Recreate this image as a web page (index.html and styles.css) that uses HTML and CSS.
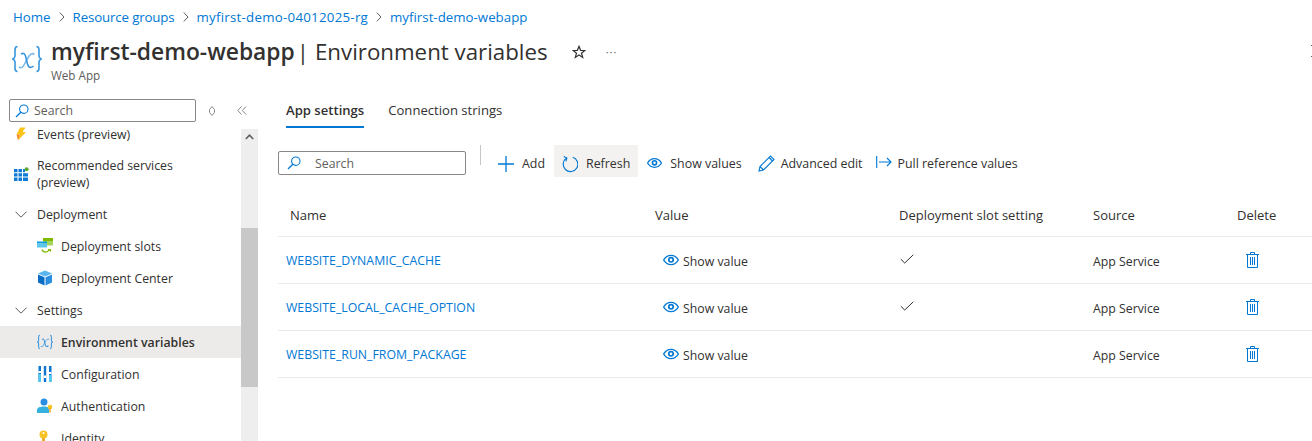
FILE: index.html
```html
<!DOCTYPE html>
<html lang="en">
<head>
    <meta charset="UTF-8">
    <title>Environment variables</title>
    <link rel="stylesheet" href="styles.css">
</head>
<body>
    <svg class="defs" width="0" height="0">
        <symbol id="eye" viewBox="0 0 16 12"><path d="M.6 6C2.4 3 5 1.4 8 1.4S13.600 3 15.400 6C13.600 9 11 10.600 8 10.600S2.400 9 .6 6Z" fill="none" stroke="currentColor" stroke-width="1.400"/><circle cx="8" cy="5.800" r="2.200" fill="none" stroke="currentColor" stroke-width="1.700"/></symbol>
        <symbol id="trash" viewBox="0 0 13 16"><path d="M0 2.500H13M4.500 2.500V.5H8.500V2.500M1.500 2.500V15.500H11.500V2.500M4.500 5V13M6.500 5V13M8.500 5V13" fill="none" stroke="currentColor" stroke-width="1"/></symbol>
        <symbol id="check" viewBox="0 0 14 10"><path d="M.8 5.200L4.700 9 13.300.8" fill="none" stroke="currentColor" stroke-width="1"/></symbol>
        <symbol id="glass" viewBox="0 0 14 14"><circle cx="8.800" cy="5.200" r="4.200" fill="none" stroke="currentColor" stroke-width="1.100"/><path d="M5.800 8.200L1 13" fill="none" stroke="currentColor" stroke-width="1.300"/></symbol>
        <symbol id="chev" viewBox="0 0 12 7"><path d="M.5.700L6 6.200 11.500.700" fill="none" stroke="currentColor" stroke-width="1"/></symbol>
        <symbol id="crumb" viewBox="0 0 6 10"><path d="M.8.600L5 5 .8 9.400" fill="none" stroke="currentColor" stroke-width="1"/></symbol>
        <symbol id="envx" viewBox="0 0 30 28"><g fill="none" stroke="#3a96dd"><path d="M5.500 1.500C3.500 1.500 3 3 3 5V11C3 12.800 2 13.500 .8 14C2 14.500 3 15.200 3 17V23C3 25 3.500 26.500 5.500 26.500M24.500 1.500C26.500 1.500 27 3 27 5V11C27 12.800 28 13.500 29.200 14C28 14.500 27 15.200 27 17V23C27 25 26.500 26.500 24.500 26.500"/><path d="M9 9C11.500 7.500 13 8.500 13.800 12L15.500 19C16.300 22.500 18.500 23.500 21.500 21"/><path d="M22.500 9.500C20.500 7.500 18 9 15.500 13.500L12.500 19C11 22.500 9 23.500 7 22" opacity=".65"/></g></symbol>
    </svg>

    <nav class="breadcrumb">
        <a>Home</a><svg class="sep"><use href="#crumb"/></svg>
        <a class="crumb-tight">Resource groups</a><svg class="sep"><use href="#crumb"/></svg>
        <a class="crumb-wide">myfirst-demo-04012025-rg</a><svg class="sep"><use href="#crumb"/></svg>
        <a>myfirst-demo-webapp</a>
    </nav>

    <header class="page-head">
        <svg class="page-icon"><use href="#envx"/></svg>
        <div class="page-titles">
            <div class="title-row">
                <h1><b>myfirst-demo-webapp</b><span class="pipe">|</span>Environment variables</h1>
                <svg class="star" width="14" height="14" viewBox="0 0 14 14"><path d="M7 1.300L8.600 5.300 12.800 5.500 9.500 8.200 10.700 12.400 7 10 3.300 12.400 4.500 8.200 1.200 5.500 5.400 5.300Z" fill="none" stroke="#323130" stroke-width="1.200"/></svg>
                <span class="more">···</span>
            </div>
            <div class="subtitle">Web App</div>
        </div>
        <svg class="close-mark" width="1" height="12" viewBox="0 0 1 12"><path d="M0 0H1V1H0ZM0 11H1V12H0Z" fill="#605e5c"/></svg>
    </header>

    <div class="workspace">
        <aside class="sidebar">
            <div class="side-search-row">
                <div class="searchbox side-search">
                    <svg class="ic-glass"><use href="#glass"/></svg>
                    <span>Search</span>
                </div>
                <svg class="updown" width="8" height="10" viewBox="0 0 8 10"><path d="M4 .5L6.500 3.500V6.500L4 9.500 1.500 6.500V3.500Z" fill="none" stroke="#8a8886" stroke-width="1"/></svg>
                <svg class="collapse" width="10" height="9" viewBox="0 0 10 9"><path d="M4.500.5L.8 4.500 4.500 8.500M9 .5L5.300 4.500 9 8.500" fill="none" stroke="#8a8886" stroke-width="1"/></svg>
            </div>
            <div class="side-scroll">
                <ul class="menu">
                    <li class="item top">
                        <svg class="menu-icon" width="16" height="16" viewBox="0 0 16 16"><path d="M7 1.500H12.500L9.500 6H13L5 14.500 7 8.500H3.500Z" fill="#fcc419"/><path d="M3.500 8.500H7L5 14.500Z" fill="#f28c28"/></svg>
                        <span>Events (preview)</span>
                    </li>
                    <li class="item top tall">
                        <svg class="menu-icon" width="16" height="16" viewBox="0 0 16 16"><path d="M1 3H4.500V6.200H1ZM5.500 3H9V6.200H5.500ZM10 3H12V6.200H10ZM1 7.200H4.500V10.400H1ZM5.500 7.200H9V10.400H5.500ZM10 7.200H15V10.400H10ZM1 11.400H4.500V15H1ZM5.500 11.400H9V15H5.500ZM10 11.400H15V15H10Z" fill="#0f7bd6"/><circle cx="13.600" cy="3.200" r="2" fill="#5ea832"/></svg>
                        <span class="wrap-label">Recommended services (preview)</span>
                    </li>
                    <li class="item group">
                        <svg class="group-chev"><use href="#chev"/></svg>
                        <span>Deployment</span>
                    </li>
                    <li class="item child">
                        <svg class="menu-icon" width="16" height="16" viewBox="0 0 16 16"><path d="M6 0H16V3H6Z" fill="#7fba00"/><path d="M6 3H16V7.500H6Z" fill="#a5d35f"/><path d="M0 3.500H10V5.500H0Z" fill="#0f9bd7"/><path d="M0 5.500H10V9.500H0Z" fill="#5cc6ee"/><path d="M5 11.500C6 14.800 10.500 15 12.500 11.500" fill="none" stroke="#7fba00" stroke-width="1.300"/><path d="M10.500 11H14V14Z" fill="#7fba00"/></svg>
                        <span>Deployment slots</span>
                    </li>
                    <li class="item child">
                        <svg class="menu-icon" width="16" height="16" viewBox="0 0 16 16"><path d="M8 .5L15 3.500 8 6.500 1 3.500Z" fill="#5ab4f0"/><path d="M1 4.500L7.500 7.300V15.500L1 12.500Z" fill="#0a6cc4"/><path d="M15 4.500L8.500 7.300V15.500L15 12.500Z" fill="#2a8fe0"/></svg>
                        <span>Deployment Center</span>
                    </li>
                    <li class="item group">
                        <svg class="group-chev"><use href="#chev"/></svg>
                        <span>Settings</span>
                    </li>
                    <li class="item child active">
                        <svg class="menu-icon env-icon"><use href="#envx"/></svg>
                        <span>Environment variables</span>
                    </li>
                    <li class="item child">
                        <svg class="menu-icon" width="16" height="16" viewBox="0 0 16 16"><path d="M1.500 0H4V16H1.500ZM6.800 0H9.200V16H6.800ZM12 0H14.500V16H12Z" fill="#0a78d0"/><path d="M1.500 8H4V16H1.500ZM12 9H14.500V16H12Z" fill="#50c8f0"/><path d="M6.800 9.500H9.200V12H6.800Z" fill="#fff"/><path d="M1.500 5H4V7H1.500ZM12 6H14.500V8H12Z" fill="#fff"/></svg>
                        <span>Configuration</span>
                    </li>
                    <li class="item child">
                        <svg class="menu-icon" width="16" height="16" viewBox="0 0 16 16"><circle cx="7" cy="4" r="3.500" fill="#2a8fe0"/><path d="M0 15V12C0 9.500 3 8.500 7 8.500S12 9.500 12 12V15Z" fill="#35b1e0"/><circle cx="13" cy="9" r="2.300" fill="#f7c325"/><path d="M12.300 10H13.700V14.500H12.300Z" fill="#e8a317"/></svg>
                        <span>Authentication</span>
                    </li>
                    <li class="item child">
                        <svg class="menu-icon" width="16" height="16" viewBox="0 0 16 16"><circle cx="6.500" cy="4.500" r="4" fill="#f7c325"/><circle cx="6.500" cy="3" r="1" fill="#fff"/><path d="M5.200 8H7.800V15H5.200Z" fill="#e8a317"/><circle cx="13" cy="14" r="2.200" fill="#2a8fe0"/></svg>
                        <span>Identity</span>
                    </li>
                </ul>
                <div class="scrollbar">
                    <svg class="scroll-up" width="9" height="6" viewBox="0 0 9 6"><path d="M.8 5L4.500 1.200 8.200 5" fill="none" stroke="#605e5c" stroke-width="1.600"/></svg>
                    <div class="scroll-thumb"></div>
                </div>
            </div>
        </aside>

        <main class="content">
            <div class="tabs">
                <span class="tab selected">App settings</span>
                <span class="tab">Connection strings</span>
            </div>

            <div class="toolbar">
                <div class="searchbox table-search">
                    <svg class="ic-glass"><use href="#glass"/></svg>
                    <span>Search</span>
                </div>
                <span class="tool-divider"></span>
                <button class="tool add">
                    <svg width="16" height="16" viewBox="0 0 16 16"><path d="M8 0V16M0 8H16" stroke="#0078d4" stroke-width="1.300" fill="none"/></svg>Add
                </button>
                <button class="tool refresh">
                    <svg width="16" height="18" viewBox="0 0 16 18"><path d="M4.600 3.100A7.300 7.300 0 1 0 10.800 2.300" stroke="#0078d4" stroke-width="1.200" fill="none"/><path d="M1.700 1.500L4.900 3 3.900 6.400" stroke="#0078d4" stroke-width="1.100" fill="none"/></svg>Refresh
                </button>
                <button class="tool show">
                    <svg class="eye-lg"><use href="#eye"/></svg>Show values
                </button>
                <button class="tool edit">
                    <svg width="17" height="17" viewBox="0 0 17 17"><path d="M1 16L2 11.500 12.500 1 16 4.500 5.500 15ZM2 11.500L5.500 15M11 2.500L14.500 6" stroke="#0078d4" stroke-width="1.100" fill="none"/></svg>Advanced edit
                </button>
                <button class="tool pull">
                    <svg width="16" height="12" viewBox="0 0 16 12"><path d="M.7 0V12M3 6H15M11 2L15 6 11 10" stroke="#0078d4" stroke-width="1.100" fill="none"/></svg>Pull reference values
                </button>
            </div>

            <div class="grid">
                <div class="row head">
                    <div class="cell name">Name</div>
                    <div class="cell">Value</div>
                    <div class="cell">Deployment slot setting</div>
                    <div class="cell">Source</div>
                    <div class="cell">Delete</div>
                </div>
                <div class="row">
                    <div class="cell name"><a>WEBSITE_DYNAMIC_CACHE</a></div>
                    <div class="cell value"><svg class="eye-sm"><use href="#eye"/></svg>Show value</div>
                    <div class="cell"><svg class="tick"><use href="#check"/></svg></div>
                    <div class="cell source">App Service</div>
                    <div class="cell del"><svg class="bin"><use href="#trash"/></svg></div>
                </div>
                <div class="row">
                    <div class="cell name"><a>WEBSITE_LOCAL_CACHE_OPTION</a></div>
                    <div class="cell value"><svg class="eye-sm"><use href="#eye"/></svg>Show value</div>
                    <div class="cell"><svg class="tick"><use href="#check"/></svg></div>
                    <div class="cell source">App Service</div>
                    <div class="cell del"><svg class="bin"><use href="#trash"/></svg></div>
                </div>
                <div class="row">
                    <div class="cell name"><a>WEBSITE_RUN_FROM_PACKAGE</a></div>
                    <div class="cell value"><svg class="eye-sm"><use href="#eye"/></svg>Show value</div>
                    <div class="cell"></div>
                    <div class="cell source">App Service</div>
                    <div class="cell del"><svg class="bin"><use href="#trash"/></svg></div>
                </div>
            </div>
        </main>
    </div>
</body>
</html>
```

FILE: styles.css
```css
/* Page frame */
html, body {
    height: 100%;
    margin: 0;
    overflow: hidden;
}

body {
    display: flex;
    flex-direction: column;
    background: #fff;
    color: #323130;
    font-family: "Open Sans", "Noto Sans", sans-serif;
    font-size: 12.3px;
}

.defs {
    position: absolute;
}

a {
    color: #0078d4;
}

/* Breadcrumb */
.breadcrumb {
    display: flex;
    align-items: center;
    height: 18px;
    padding: 8px 0 0 13px;
    color: #0078d4;
    font-size: 13.3px;
}

.crumb-tight {
    letter-spacing: -.15px;
}

.crumb-wide {
    letter-spacing: .25px;
}

.sep {
    width: 6px;
    height: 10px;
    margin: 0 8px;
    color: #605e5c;
}

/* Title */
.page-head {
    display: flex;
    height: 73px;
    padding-left: 12px;
}

.page-icon {
    flex: none;
    width: 30px;
    height: 28px;
    margin: 19px 9px 0 0;
    stroke-width: 1.6;
}

.page-titles {
    padding-top: 10px;
    flex: 1;
}

.title-row {
    display: flex;
    align-items: center;
    height: 31px;
}

h1 {
    margin: 0;
    font-size: 22.3px;
    font-weight: 400;
    white-space: nowrap;
}

h1 b {
    font-size: 22.8px;
    font-weight: 600;
}

.pipe {
    margin: 0 6px 0 2px;
}

.star {
    margin-left: 24px;
}

.more {
    margin-left: 20px;
    color: #605e5c;
    font-size: 11px;
    letter-spacing: 1px;
}

.subtitle {
    color: #605e5c;
    font-size: 11.7px;
}

.close-mark {
    flex: none;
    margin-top: 19px;
}

/* Workspace */
.workspace {
    flex: 1;
    display: flex;
    min-height: 0;
}

.sidebar {
    width: 258px;
    flex: none;
    display: flex;
    flex-direction: column;
}

.searchbox {
    display: flex;
    align-items: center;
    box-sizing: border-box;
    border: 1px solid #8a8886;
    border-radius: 2px;
    color: #605e5c;
}

.ic-glass {
    width: 14px;
    height: 14px;
    color: #0078d4;
}

.side-search-row {
    display: flex;
    align-items: center;
    height: 23px;
    padding-left: 9px;
}

.side-search {
    width: 187px;
    height: 23px;
    padding-left: 5px;
    gap: 5px;
}

.updown {
    margin-left: 12px;
}

.collapse {
    margin-left: 21px;
}

/* Side menu */
.side-scroll {
    flex: 1;
    display: flex;
    min-height: 0;
    margin-top: 2px;
    overflow: hidden;
}

.menu {
    flex: 1;
    margin: -6px 0 0;
    padding: 0;
    list-style: none;
}

.item {
    display: flex;
    align-items: center;
    height: 32px;
    padding-left: 13px;
}

.item.tall {
    height: 48px;
    line-height: 17px;
}

.wrap-label {
    max-width: 150px;
}

.item.top .menu-icon {
    margin-right: 8px;
    flex: none;
}

.item.group {
    padding-left: 15px;
}

.group-chev {
    width: 12px;
    height: 7px;
    margin-right: 10px;
    color: #605e5c;
}

.item.child {
    padding-left: 37px;
}

.item.child .menu-icon {
    width: 16px;
    height: 16px;
    margin-right: 8px;
    flex: none;
}

.env-icon {
    stroke-width: 2;
}

.item.active {
    background: #edebe9;
    font-weight: 600;
}

.scrollbar {
    width: 17px;
    flex: none;
    margin-top: 5px;
    background: #eeeeee;
}

.scroll-up {
    display: block;
    margin: 5px auto 0;
}

.scroll-thumb {
    height: 159px;
    margin-top: 88px;
    background: #c8c8c8;
}

/* Main */
.content {
    flex: 1;
    min-width: 0;
    padding-left: 20px;
}

.tabs {
    display: flex;
    gap: 24px;
    height: 29px;
    padding-left: 8px;
    font-size: 13.1px;
}

.tab {
    box-sizing: border-box;
    height: 29px;
    padding-top: 2px;
}

.tab.selected {
    border-bottom: 2px solid #0078d4;
    font-weight: 600;
}

.toolbar {
    display: flex;
    align-items: flex-start;
    height: 32px;
    margin-top: 17px;
}

.table-search {
    width: 188px;
    height: 24px;
    margin-top: 6px;
    padding-left: 8px;
    gap: 14px;
}

.tool-divider {
    width: 1px;
    height: 20px;
    margin: 0 9px 0 14px;
    background: #c8c6c4;
}

.tool {
    display: flex;
    align-items: center;
    box-sizing: border-box;
    height: 32px;
    padding: 5px 8px 0;
    border: none;
    background: none;
    color: #323130;
    font: inherit;
    font-size: 12.4px;
}

.tool svg {
    margin-right: 8px;
}

.tool.add {
    padding-right: 9px;
}

.tool.refresh {
    background: #f3f2f1;
}

.tool.show {
    padding-left: 9px;
}

.tool.edit svg {
    margin-right: 6px;
}

.tool.pull {
    padding-left: 5px;
}

.tool.pull svg {
    margin: -4px 6px 0 0;
}

.eye-lg {
    width: 15px;
    height: 12px;
    margin-bottom: 2px;
    color: #0078d4;
}

/* Grid */
.grid {
    margin-top: 21px;
}

.row {
    display: grid;
    grid-template-columns: 377px 244px 194px 144px 1fr;
    align-items: center;
    height: 46px;
    border-bottom: 1px solid #edebe9;
}

.row.head {
    height: 39px;
    padding-bottom: 5px;
    box-sizing: border-box;
    font-size: 13px;
}

.row.head .cell.name {
    padding-left: 12px;
}

.cell.name {
    padding-left: 8px;
}

.value {
    display: flex;
    align-items: center;
    gap: 4px;
    padding: 2px 0 0 8px;
}

.source {
    padding-top: 2px;
}

.eye-sm {
    width: 16px;
    height: 12px;
    margin-bottom: 2px;
    color: #0078d4;
}

.tick {
    display: block;
    width: 14px;
    height: 10px;
    margin: 0 0 2px 1px;
}

.del {
    padding-left: 9px;
}

.bin {
    display: block;
    width: 13px;
    height: 16px;
    color: #0078d4;
}
```
